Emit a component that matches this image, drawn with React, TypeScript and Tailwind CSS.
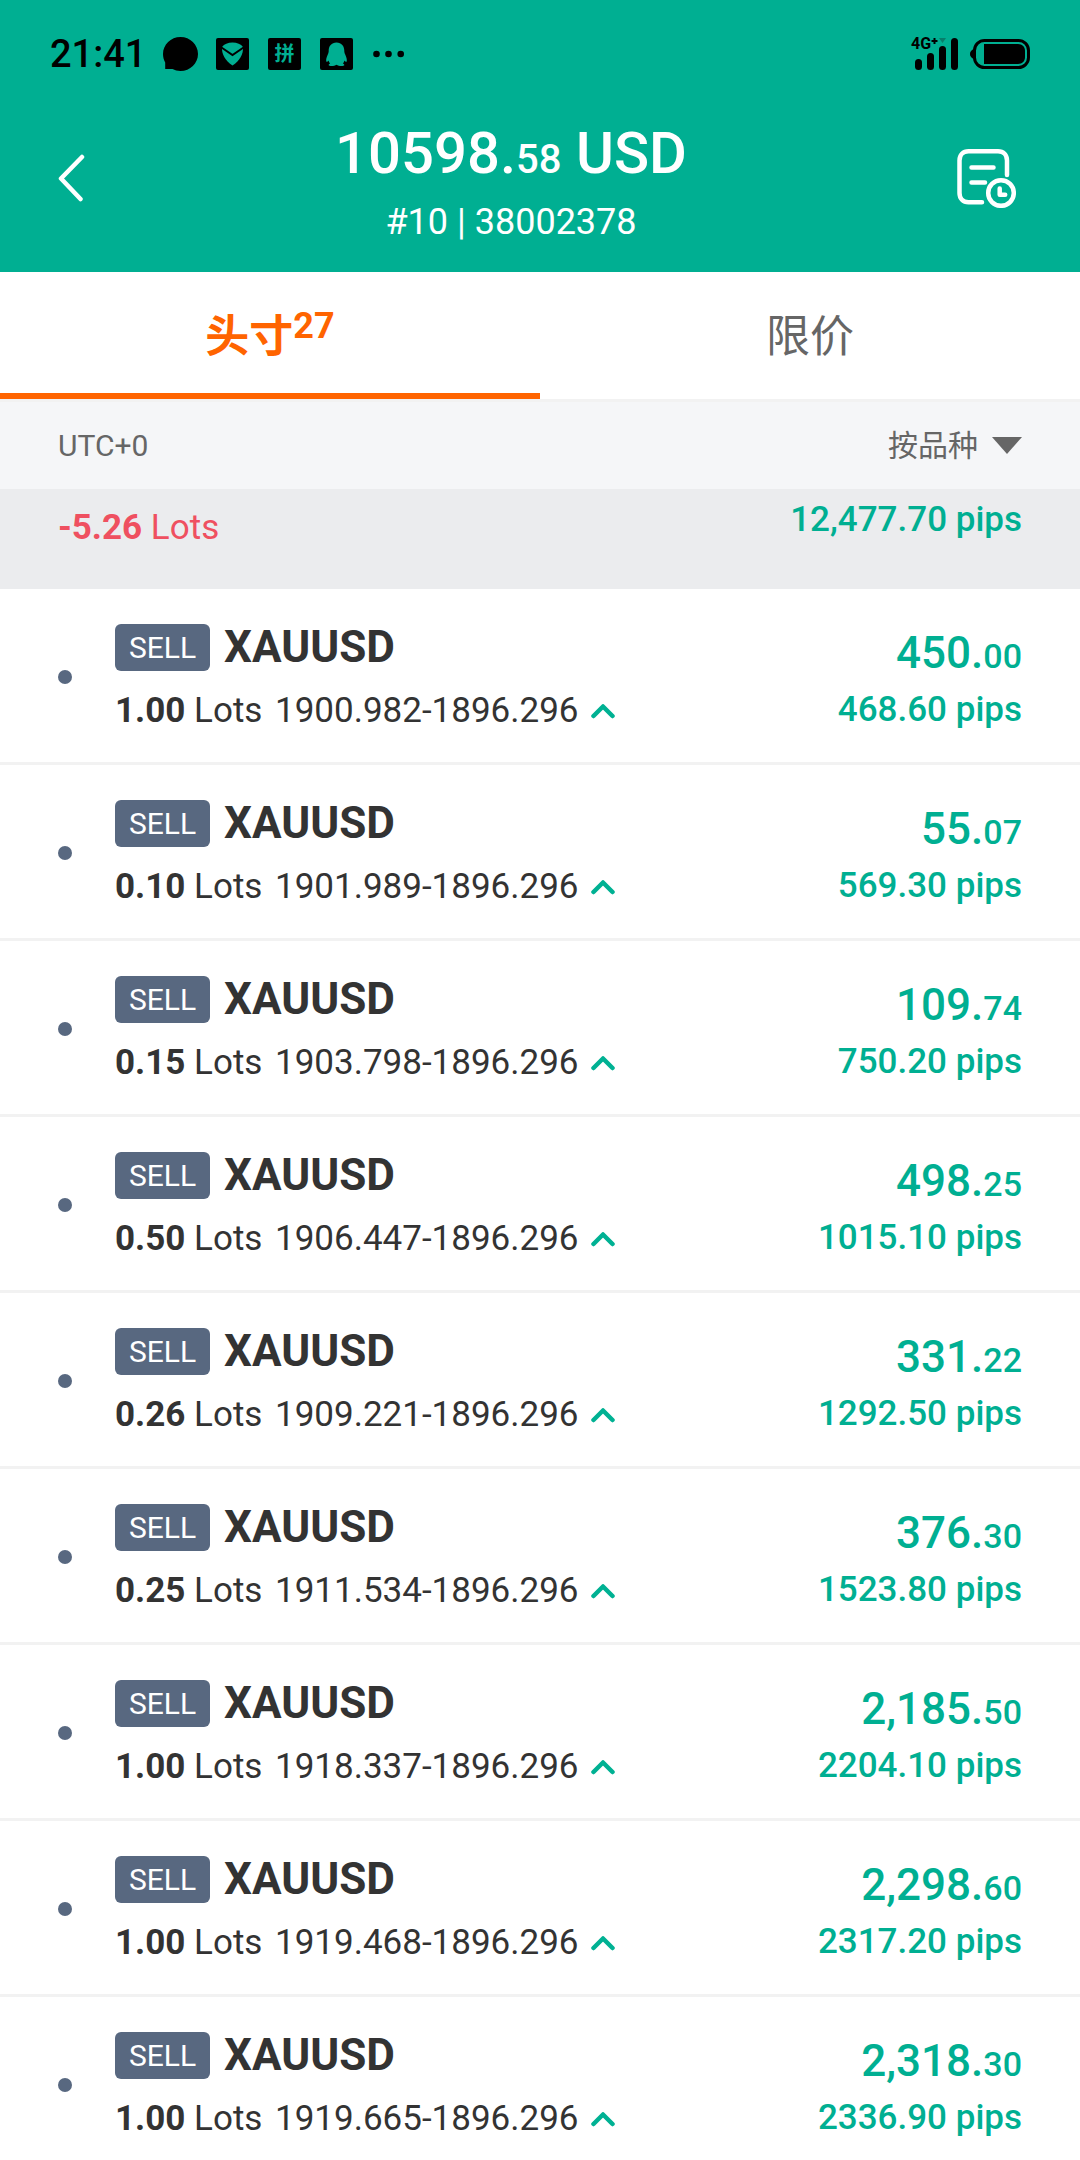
import React, { useState } from 'react'

interface Position {
  lots: string
  open: string
  current: string
  profit: string
  pips: string
}

const positions: Position[] = [
  { lots: '1.00', open: '1900.982', current: '1896.296', profit: '450.00', pips: '468.60' },
  { lots: '0.10', open: '1901.989', current: '1896.296', profit: '55.07', pips: '569.30' },
  { lots: '0.15', open: '1903.798', current: '1896.296', profit: '109.74', pips: '750.20' },
  { lots: '0.50', open: '1906.447', current: '1896.296', profit: '498.25', pips: '1015.10' },
  { lots: '0.26', open: '1909.221', current: '1896.296', profit: '331.22', pips: '1292.50' },
  { lots: '0.25', open: '1911.534', current: '1896.296', profit: '376.30', pips: '1523.80' },
  { lots: '1.00', open: '1918.337', current: '1896.296', profit: '2,185.50', pips: '2204.10' },
  { lots: '1.00', open: '1919.468', current: '1896.296', profit: '2,298.60', pips: '2317.20' },
  { lots: '1.00', open: '1919.665', current: '1896.296', profit: '2,318.30', pips: '2336.90' }
]

const StatusBar: React.FC = () => (
  <div className="flex h-[108px] items-center justify-between px-[50px] text-black">
    <div className="flex items-center">
      <span className="w-[113px] text-[38px] leading-none font-medium">21:41</span>
      <svg className="h-[34px] w-[35px]" viewBox="0 0 35 34">
        <path d="M17.5 0C27.2 0 35 7.600 35 17s-7.800 17-17.500 17c-3 0-5.700-.700-8-1.900H2.200v-6.500C.8 23 0 20 0 17 0 7.600 7.800 0 17.500 0z" />
      </svg>
      <svg className="ml-[18px] h-8 w-[33px]" viewBox="0 0 33 32">
        <rect width="33" height="32" rx="2" />
        <path
          d="M6 9c2-3 6-4.500 10.500-4.500S25 6 27 9c.6 7-3.500 14-10.500 18.500C9.500 23 5.400 16 6 9z"
          fill="#00af92"
        />
        <path d="M5.500 9.500 16.500 17l11-7.500" fill="none" stroke="#000" strokeWidth="2" />
      </svg>
      <span className="ml-[19px] flex h-8 w-[33px] items-center justify-center rounded-xs bg-black text-xl leading-none font-bold text-[#00af92]">
        拼
      </span>
      <svg className="ml-[19px] h-8 w-[33px]" viewBox="0 0 33 32">
        <rect width="33" height="32" rx="2" />
        <path
          d="M16.500 4.500c-5 0-7.800 3.600-7.800 8.300 0 1.500-.2 2.200-.9 3.700-1.200 2.600-2 5-1.500 7 .4.800 1.400.2 2.200-1 .3 1.200.9 2.200 1.700 3-1 .4-1.700 1-1.500 1.700.4 1.200 5.800 1.100 7.800-.4 2 1.500 7.400 1.600 7.800.4.2-.7-.5-1.300-1.500-1.700.8-.8 1.400-1.800 1.700-3 .8 1.200 1.800 1.800 2.200 1 .5-2-.3-4.400-1.500-7-.7-1.500-.9-2.200-.9-3.700 0-4.700-2.800-8.300-7.800-8.300z"
          fill="#00af92"
        />
      </svg>
      <svg className="ml-5 h-2 w-8" viewBox="0 0 32 8">
        <circle cx="3.500" cy="4" r="3.300" />
        <circle cx="15.500" cy="4" r="3.300" />
        <circle cx="27.700" cy="4" r="3.300" />
      </svg>
    </div>
    <div className="flex items-center">
      <div className="relative">
        <svg className="h-8 w-12" viewBox="0 0 48 32">
          <rect x="4" y="21" width="7" height="11" rx="3.500" />
          <rect x="16" y="15" width="7" height="17" rx="3.500" />
          <rect x="28" y="8" width="7" height="24" rx="3.500" />
          <rect x="40" y="0" width="7" height="32" rx="3.500" />
          <path d="M28 0h7l-3.500 5z" fill="#067f6b" />
          <path d="M23.500 0v6M20.500 3h6" stroke="#000" strokeWidth="2" />
        </svg>
        <span className="absolute top-0 left-0 text-base leading-3 font-bold">4G</span>
      </div>
      <svg className="ml-[11px] h-[30px] w-[60px]" viewBox="0 0 60 30">
        <path d="M4 10C1.500 11 0 12.500 0 15s1.500 4 4 5z" />
        <rect x="4.500" y="1.500" width="54" height="27" rx="10" fill="none" stroke="#000" strokeWidth="3" />
        <path d="M14 5h34c4.500 0 7 3 7 7v6c0 4-2.500 7-7 7H14z" />
      </svg>
    </div>
  </div>
)

const AccountHeader: React.FC = () => (
  <div className="flex h-[164px] items-start pt-3 pr-[64px] pl-[57px] text-white">
    <button aria-label="返回" className="mt-[34px]">
      <svg className="h-12 w-7" viewBox="0 0 28 48" fill="none" stroke="currentColor" strokeWidth="4.500" strokeLinecap="round" strokeLinejoin="round">
        <path d="M25 3 4 24.500 23.500 45" />
      </svg>
    </button>
    <div className="flex-1 pr-5 text-center">
      <h1 className="text-[58px] leading-[66px] font-medium">
        10598.<span className="text-[40px]">58</span> USD
      </h1>
      <p className="mt-1 text-[36px] leading-[50px]">#10 | 38002378</p>
    </div>
    <button aria-label="历史记录" className="mt-[29px]">
      <svg className="h-[59px] w-[59px]" viewBox="0 0 59 59" fill="none" stroke="currentColor" strokeWidth="4.500" strokeLinecap="round" strokeLinejoin="round">
        <path d="M25 53.200H11.500c-5.500 0-9-3.700-9-9.200V11.500c0-5.500 3.500-9.200 9-9.200H41c5.500 0 9 3.700 9 9.200V26" />
        <path d="M14.500 18.500h22M14.500 33.500H28" />
        <circle cx="44" cy="44" r="12.800" />
        <path d="M42.700 39.500v6.200h5.500" />
      </svg>
    </button>
  </div>
)

const PositionRow: React.FC<{ position: Position }> = ({ position }) => {
  const [whole, cents] = position.profit.split('.')

  return (
    <li className="flex h-[176px] items-start border-b-3 border-[#f2f2f2] px-[58px]">
      <span className="mt-[81px] mr-[43px] h-3.5 w-3.5 rounded-full bg-[#586880]" />
      <div className="flex-1 pt-[31px]">
        <div className="flex items-center">
          <span className="flex h-[47px] w-[95px] items-center justify-center rounded-md bg-[#586880] text-[30px] text-white">
            SELL
          </span>
          <span className="ml-3.5 text-[44px] leading-[54px] font-bold">XAUUSD</span>
        </div>
        <div className="mt-3.5 flex items-center text-[35px] leading-[46px]">
          <span className="w-[160px]">
            <b>{position.lots}</b> Lots
          </span>
          <span>
            {position.open}-{position.current}
          </span>
          <svg className="ml-3 h-4 w-6" viewBox="0 0 24 16" fill="none" stroke="#00b193" strokeWidth="4.500" strokeLinecap="round" strokeLinejoin="round">
            <path d="M2.500 13 12 3.500 21.500 13" />
          </svg>
        </div>
      </div>
      <div className="pt-[37px] text-right font-medium text-[#00af92]">
        <p className="text-[44px] leading-[54px]">
          {whole}.<span className="text-[34px]">{cents}</span>
        </p>
        <p className="text-[35px] leading-[54px]">{position.pips} pips</p>
      </div>
    </li>
  )
}

const App: React.FC = () => {
  const [tab, setTab] = useState<'positions' | 'limits'>('positions')

  const activeTab = 'h-[127px] border-b-6 border-[#ff6400] pt-2 font-bold text-[#ff6400]'
  const inactiveTab = 'h-[127px] border-b-6 border-transparent pt-2 text-[#666]'

  return (
    <div className="flex h-screen flex-col overflow-hidden bg-white font-[Roboto,'Noto_Sans_CJK_SC',sans-serif] text-[#333]">
      <header className="bg-[#00af92]">
        <StatusBar />
        <AccountHeader />
      </header>

      <nav className="grid shrink-0 grid-cols-2 text-[44px] leading-[64px]">
        <button onClick={() => setTab('positions')} className={tab === 'positions' ? activeTab : inactiveTab}>
          头寸<sup className="-top-3.5 text-[36px]">27</sup>
        </button>
        <button onClick={() => setTab('limits')} className={tab === 'limits' ? activeTab : inactiveTab}>
          限价
        </button>
      </nav>

      <div className="flex h-[90px] shrink-0 items-center justify-between border-t-3 border-[#f2f2f2] bg-[#f5f6f8] px-[58px] text-[30px] text-[#666]">
        <span>UTC+0</span>
        <label className="relative flex items-center">
          <select aria-label="排序" className="appearance-none pr-11">
            <option>按品种</option>
            <option>按时间</option>
          </select>
          <svg className="pointer-events-none absolute right-0 h-[17px] w-[30px]" viewBox="0 0 30 17">
            <path d="M0 0h30L15 17z" fill="#666" />
          </svg>
        </label>
      </div>

      <main className="flex-1 overflow-y-auto [scrollbar-width:none]">
        <div className="flex h-[100px] items-start justify-between bg-[#ebecee] px-[58px]">
          <p className="pt-[11px] text-[35px] leading-[56px] text-[#ef5060]">
            <b>-5.26</b> Lots
          </p>
          <p className="pt-1 text-[35px] leading-[54px] font-medium text-[#00af92]">12,477.70 pips</p>
        </div>
        <ul>
          {positions.map(position => (
            <PositionRow key={position.open} position={position} />
          ))}
        </ul>
      </main>
    </div>
  )
}

export default App
